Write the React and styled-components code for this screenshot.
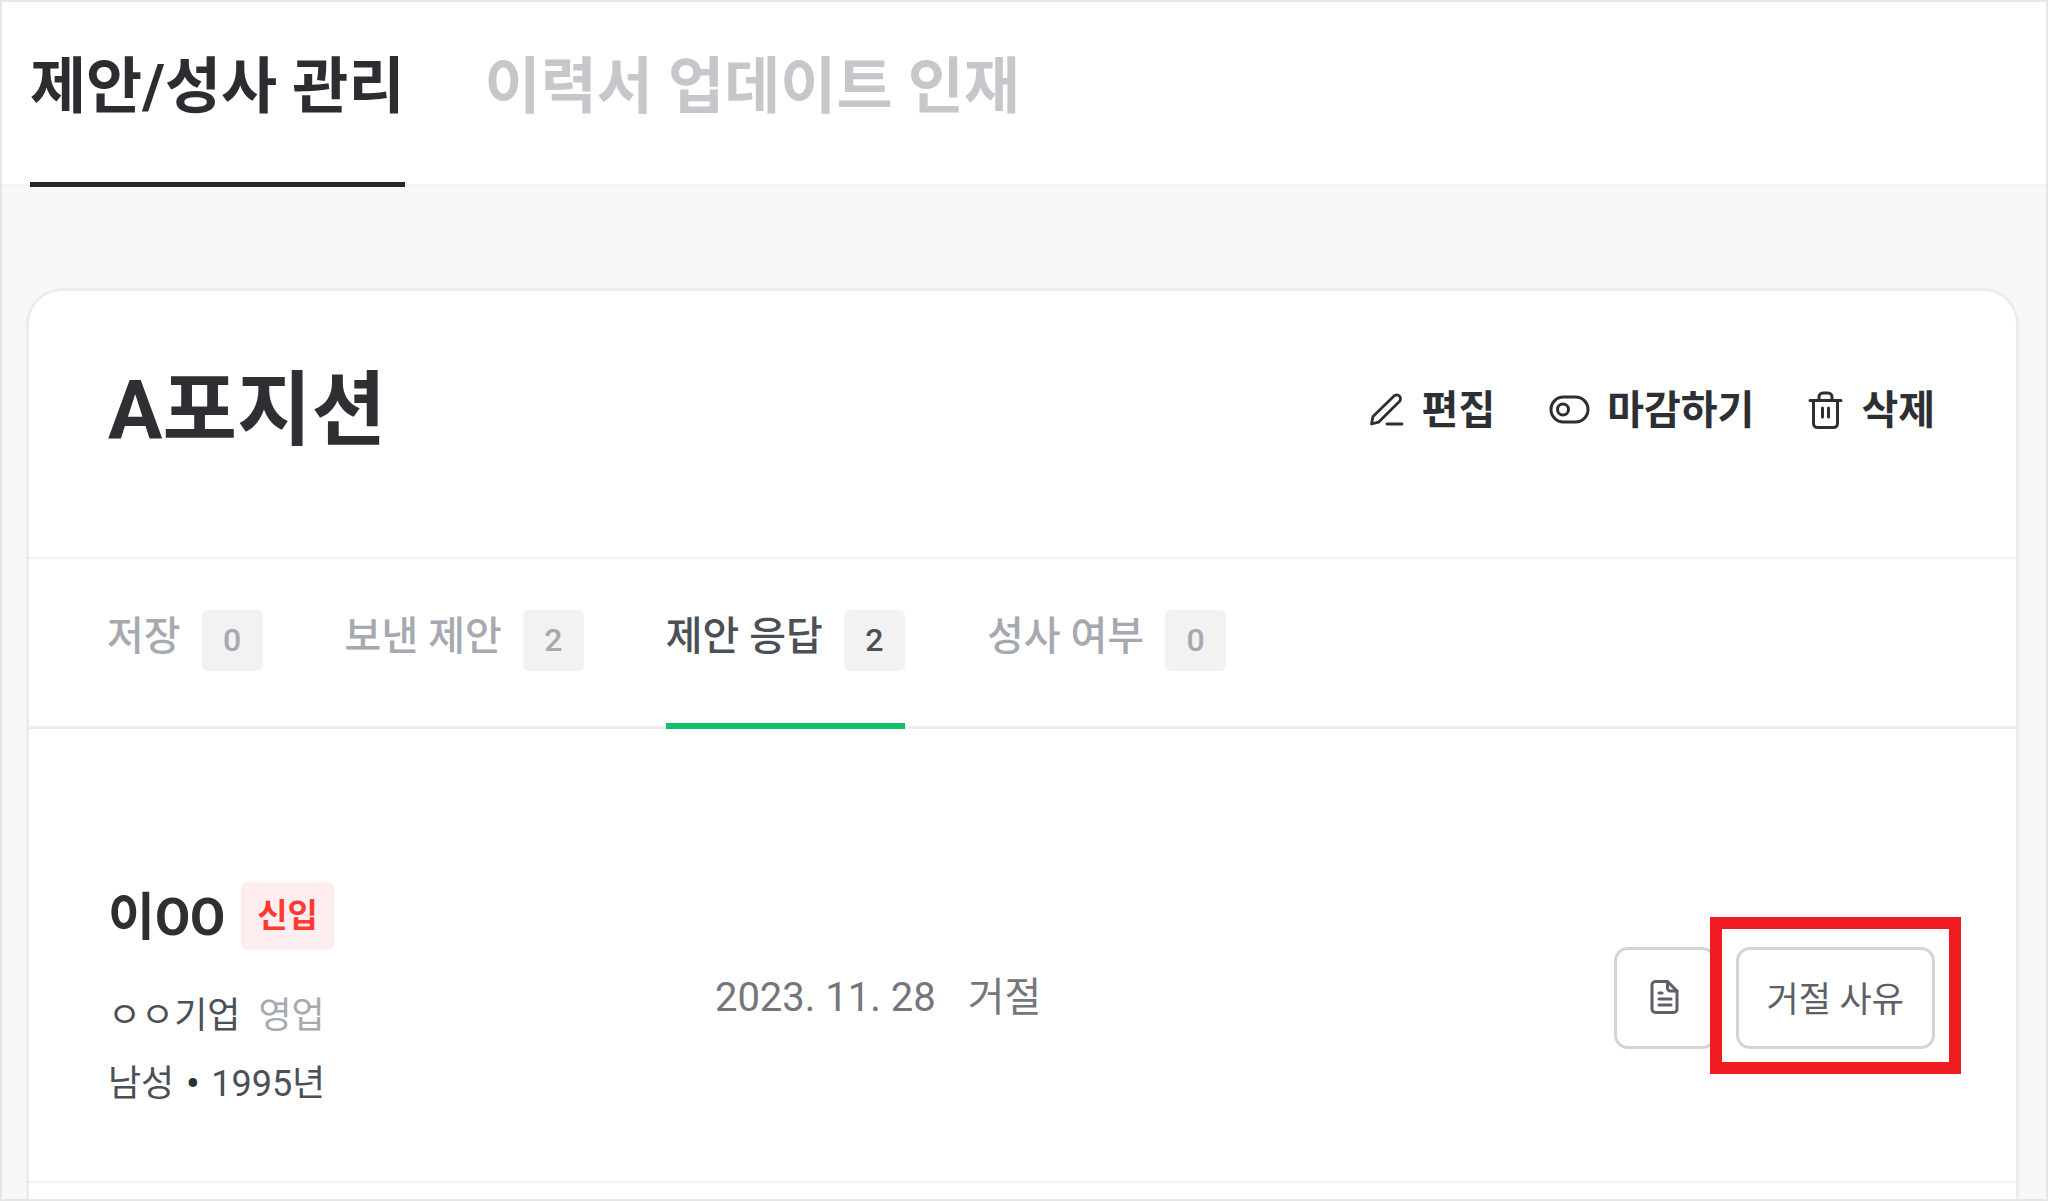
import { useState } from "react";
import styled, { createGlobalStyle } from "styled-components";

const GlobalStyle = createGlobalStyle`
    * {
        box-sizing: border-box;
    }
    body {
        margin: 0;
        font-family: Roboto, "Noto Sans CJK KR", sans-serif;
        color: #2d2f33;
    }
    button {
        font-family: inherit;
        cursor: pointer;
    }
`

const Page = styled.div`
    display: flex;
    flex-direction: column;
    min-height: 100vh;
    border: 2px solid #e6e6e6;
    background: #f8f8fb;
`

const Header = styled.header`
    display: flex;
    align-items: flex-start;
    gap: 80px;
    height: 184px;
    padding: 0 28px;
    background: #fff;
    border-bottom: 2px solid #f4f4f6;
`

const HeaderLink = styled.a`
    height: 185px;
    padding-top: 40px;
    font-size: 61px;
    line-height: 90px;
    font-weight: 700;
    text-decoration: none;
    white-space: nowrap;
    color: ${props => props.$active ? "#2b2d31" : "#c5c7cb"};
    border-bottom: 5px solid ${props => props.$active ? "#25282b" : "transparent"};
`

const Main = styled.main`
    display: flex;
    flex: 1;
    padding: 102px 27px 0 24px;
`

const Card = styled.section`
    flex: 1;
    background: #fff;
    border: 3px solid #ebecee;
    border-bottom: 0;
    border-radius: 36px 36px 0 0;
`

const CardHead = styled.div`
    display: flex;
    justify-content: space-between;
    align-items: center;
    padding: 60px 81px 86px 79px;
    border-bottom: 2px solid #f3f3f4;
`

const Title = styled.h1`
    margin: 0;
    font-size: 81px;
    line-height: 120px;
    font-weight: 700;
`

const Actions = styled.div`
    display: flex;
    gap: 54px;
`

const Action = styled.button`
    display: flex;
    align-items: center;
    gap: 17px;
    padding: 0;
    border: 0;
    background: none;
    color: #2d2f33;
    font-size: 40px;
    line-height: 60px;
    font-weight: 700;
`

const Tabs = styled.nav`
    display: flex;
    gap: 82px;
    height: 170px;
    padding: 0 78px;
    border-bottom: 3px solid #ebecec;
`

const Tab = styled.button`
    display: flex;
    align-items: flex-start;
    gap: 21px;
    height: 170px;
    padding: 48px 0 0;
    border: 0;
    border-bottom: 6px solid ${props => props.$active ? "#12c06a" : "transparent"};
    background: none;
    color: ${props => props.$active ? "#4b4f56" : "#a6a9b0"};
    font-size: 40px;
    line-height: 60px;
    font-weight: 500;
    white-space: nowrap;
`

const Count = styled.span`
    width: 61px;
    height: 61px;
    margin-top: 3px;
    border-radius: 6px;
    background: #f2f2f3;
    font-size: 32px;
    text-align: center;
`

const Row = styled.article`
    display: grid;
    grid-template-columns: 33% 1fr auto;
    column-gap: 4px;
    align-items: center;
    padding: 153px 81px 67px 79px;
    border-bottom: 2px solid #f3f3f4;
`

const NameLine = styled.div`
    display: flex;
    align-items: center;
    gap: 16px;
    margin-bottom: 36px;
`

const Name = styled.h2`
    margin: 0;
    padding-top: 4px;
    font-size: 51px;
    line-height: 64px;
    font-weight: 700;
`

const Badge = styled.span`
    padding: 0 16px;
    border-radius: 6px;
    background: #ffedf0;
    color: #fb3a33;
    font-size: 33px;
    line-height: 68px;
    font-weight: 700;
`

const Info = styled.p`
    display: flex;
    align-items: center;
    gap: ${props => props.$gap}px;
    margin: 0 0 8px;
    color: #4b4f56;
    font-size: 36px;
    line-height: 60px;
    &:last-child {
        margin-bottom: 0;
    }
`

const Muted = styled.span`
    color: #a6a9b0;
`

const Dot = styled.span`
    font-size: 36px;
    font-weight: 700;
    color: #2d2f33;
`

const Status = styled.div`
    display: flex;
    gap: 32px;
    color: #74767b;
    font-size: 40px;
    line-height: 60px;
`

const Buttons = styled.div`
    display: flex;
    gap: 20px;
`

const OutlineButton = styled.button`
    display: flex;
    align-items: center;
    justify-content: center;
    min-width: 102px;
    height: 102px;
    padding: 0 28px 3px;
    border: 3px solid #d3d4d5;
    border-radius: 14px;
    background: #fff;
    color: #5d6066;
    font-size: 35px;
    white-space: nowrap;
`

const Highlight = styled.div`
    position: relative;
    &::after {
        content: "";
        position: absolute;
        inset: -30px -26px -25px;
        border: 12px solid #ee1b23;
        pointer-events: none;
    }
`

function PenIcon() {
    return (
        <svg width="36" height="38" viewBox="0 0 36 38" fill="none" stroke="currentColor" strokeWidth="2.8" strokeLinecap="round" strokeLinejoin="round">
            <path d="M2.5 32l1.500-7.500L25 4a3.800 3.800 0 0 1 5.400 0a3.800 3.800 0 0 1 0 5.400L9.500 30.2z" />
            <path d="M18 32h15" />
        </svg>
    )
}

function ToggleIcon() {
    return (
        <svg width="41" height="38" viewBox="0 0 41 38" fill="none" stroke="currentColor" strokeWidth="3">
            <rect x="2" y="5" width="37" height="25" rx="12.5" />
            <circle cx="14" cy="17.5" r="5.5" />
        </svg>
    )
}

function TrashIcon() {
    return (
        <svg width="36" height="40" viewBox="0 0 36 40" fill="none" stroke="currentColor" strokeWidth="3" strokeLinecap="round" strokeLinejoin="round">
            <path d="M2 9.5h31M5.5 9.5v23a4 4 0 0 0 4 4h16a4 4 0 0 0 4-4v-23" />
            <path d="M11 9V6a4 4 0 0 1 4-4h5a4 4 0 0 1 4 4v3" />
            <path d="M14.500 17v9M20.500 17v9" />
        </svg>
    )
}

function DocIcon() {
    return (
        <svg width="32" height="36" viewBox="0 0 32 36" fill="none" stroke="currentColor" strokeWidth="3" strokeLinecap="round" strokeLinejoin="round">
            <path d="M18.5 2.5H6.5a3.500 3.500 0 0 0-3.500 3.500v24a3.500 3.500 0 0 0 3.500 3.500h18a3.500 3.500 0 0 0 3.500-3.500V12z" />
            <path d="M18.5 3v6a3 3 0 0 0 3 3H28" />
            <path d="M10 14h3M10 20h12M10 26h12" />
        </svg>
    )
}

const tabs = [
    { label: "저장", count: 0 },
    { label: "보낸 제안", count: 2 },
    { label: "제안 응답", count: 2 },
    { label: "성사 여부", count: 0 },
];

export default function App() {
    const [activeTab, setActiveTab] = useState("제안 응답");
    return (
        <>
            <GlobalStyle />
            <Page>
                <Header>
                    <HeaderLink href="#offers" $active>제안/성사 관리</HeaderLink>
                    <HeaderLink href="#updates">이력서 업데이트 인재</HeaderLink>
                </Header>
                <Main>
                    <Card>
                        <CardHead>
                            <Title>A포지션</Title>
                            <Actions>
                                <Action><PenIcon />편집</Action>
                                <Action><ToggleIcon />마감하기</Action>
                                <Action><TrashIcon />삭제</Action>
                            </Actions>
                        </CardHead>
                        <Tabs>
                            {tabs.map(tab => (
                                <Tab
                                    key={tab.label}
                                    $active={tab.label === activeTab}
                                    onClick={() => setActiveTab(tab.label)}>
                                    {tab.label}
                                    <Count>{tab.count}</Count>
                                </Tab>
                            ))}
                        </Tabs>
                        <Row>
                            <div>
                                <NameLine>
                                    <Name>이OO</Name>
                                    <Badge>신입</Badge>
                                </NameLine>
                                <Info $gap={18}>
                                    <span>ㅇㅇ기업</span>
                                    <Muted>영업</Muted>
                                </Info>
                                <Info $gap={12}>
                                    <span>남성</span>
                                    <Dot>•</Dot>
                                    <span>1995년</span>
                                </Info>
                            </div>
                            <Status>
                                <span>2023. 11. 28</span>
                                <span>거절</span>
                            </Status>
                            <Buttons>
                                <OutlineButton aria-label="이력서 보기"><DocIcon /></OutlineButton>
                                <Highlight>
                                    <OutlineButton>거절 사유</OutlineButton>
                                </Highlight>
                            </Buttons>
                        </Row>
                    </Card>
                </Main>
            </Page>
        </>
    )
}
